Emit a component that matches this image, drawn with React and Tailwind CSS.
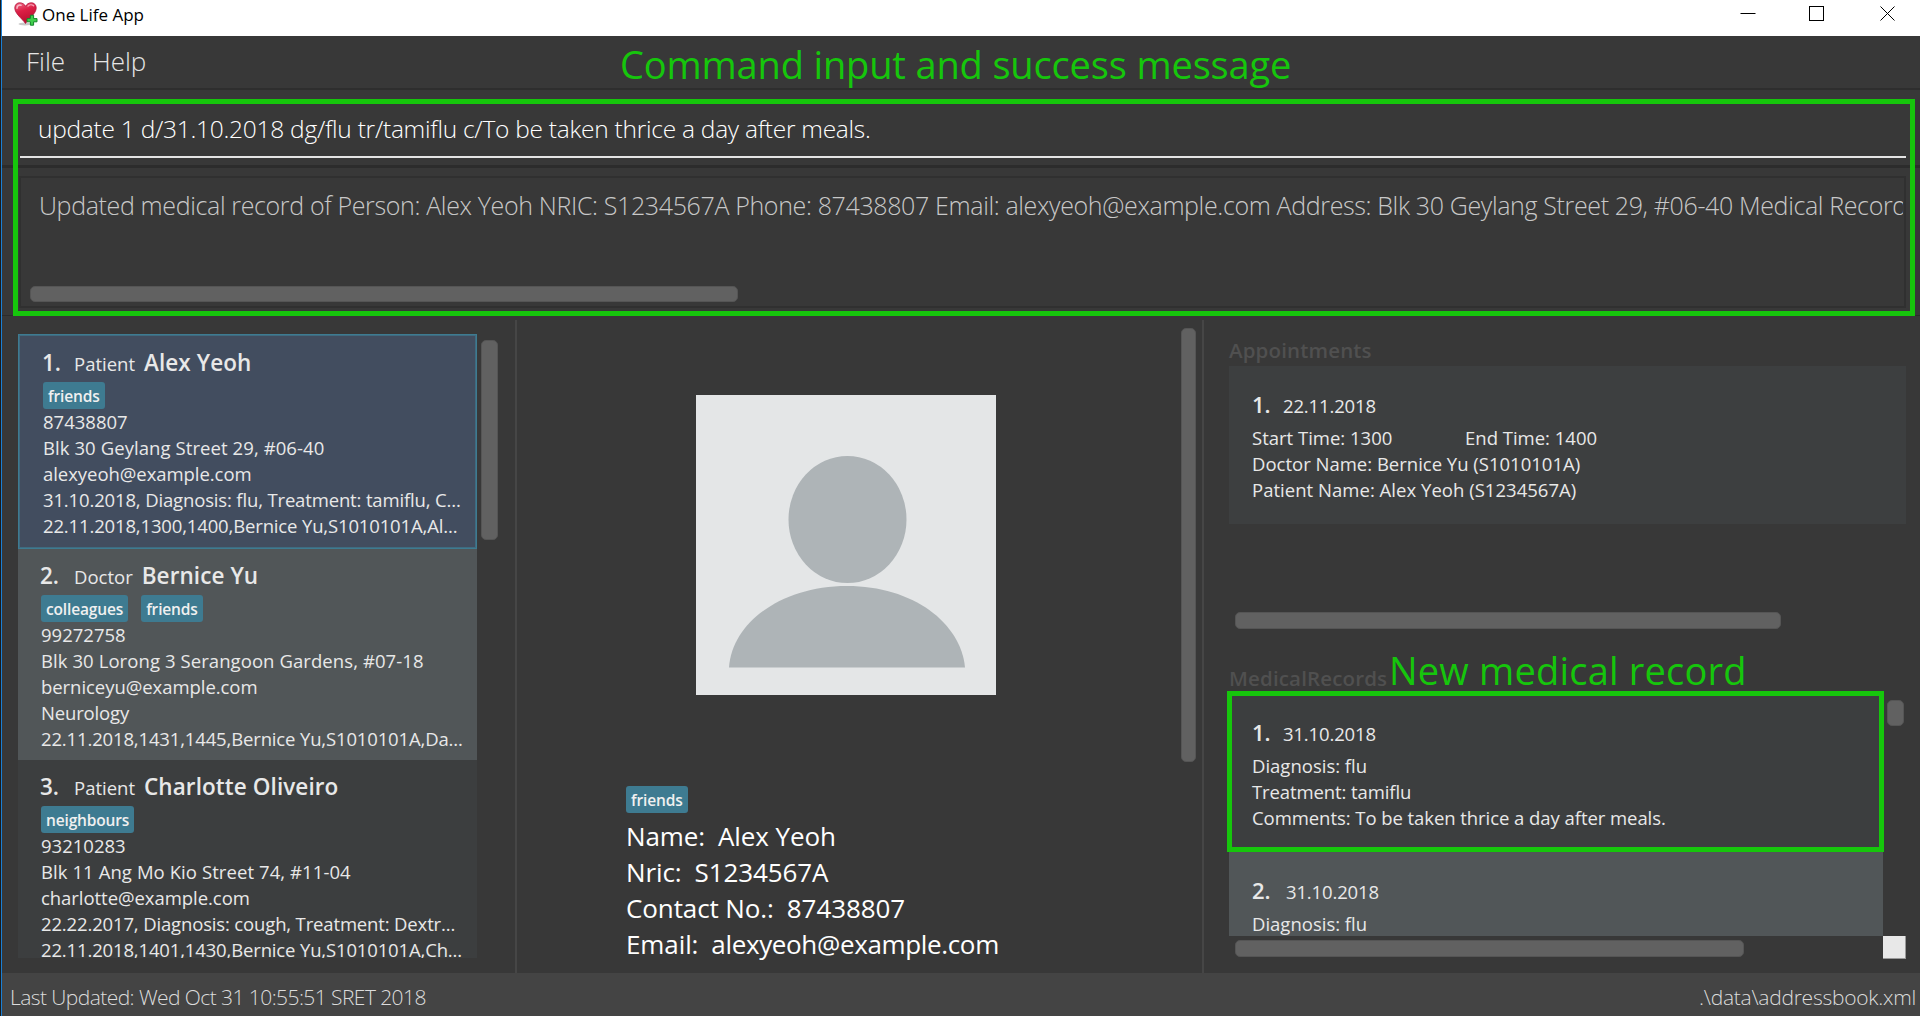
const people = [
  {
    id: "1.",
    role: "Patient",
    name: "Alex Yeoh",
    tags: ["friends"],
    phone: "87438807",
    address: "Blk 30 Geylang Street 29, #06-40",
    email: "alexyeoh@example.com",
    notes: ["31.10.2018, Diagnosis: flu, Treatment: tamiflu, C...", "22.11.2018,1300,1400,Bernice Yu,S1010101A,Al..."],
    card: "h-[215px] bg-[#424d5f] border border-[#3e7b91] shadow-[inset_0_0_0_1px_#3f6b80] pt-3 pl-[23px]",
    idWidth: "w-[32px]",
  },
  {
    id: "2.",
    role: "Doctor",
    name: "Bernice Yu",
    tags: ["colleagues", "friends"],
    phone: "99272758",
    address: "Blk 30 Lorong 3 Serangoon Gardens, #07-18",
    email: "berniceyu@example.com",
    notes: ["Neurology", "22.11.2018,1431,1445,Bernice Yu,S1010101A,Da..."],
    card: "h-[211px] bg-[#515658] pt-[11px] pl-[22px]",
    idWidth: "w-[34px]",
  },
  {
    id: "3.",
    role: "Patient",
    name: "Charlotte Oliveiro",
    tags: ["neighbours"],
    phone: "93210283",
    address: "Blk 11 Ang Mo Kio Street 74, #11-04",
    email: "charlotte@example.com",
    notes: ["22.22.2017, Diagnosis: cough, Treatment: Dextr...", "22.11.2018,1401,1430,Bernice Yu,S1010101A,Ch..."],
    card: "h-[211px] bg-[#3c3e3f] pt-[11px] pl-[22px]",
    idWidth: "w-[34px]",
  },
];

const details = [
  { label: "Name:", value: "Alex Yeoh", spacing: "tracking-[-0.1px]" },
  { label: "Nric:", value: "S1234567A", spacing: "tracking-[-0.1px]" },
  { label: "Contact No.:", value: "87438807", spacing: "tracking-[-0.1px]" },
  { label: "Email:", value: "alexyeoh@example.com", spacing: "tracking-[-0.35px]" },
];

function Tag({ children }) {
  return (
    <span className="flex h-[27px] items-center rounded-[3px] bg-[#3e7b91] px-[5px] pt-px text-[15.5px] leading-[26px] font-semibold tracking-[-0.15px] text-[#f0f0f0]">
      {children}
    </span>
  );
}

function Thumb({ className }) {
  return <div className={"rounded-[5px] border border-[#555555] bg-[#616161] " + className} />;
}

function PersonCard({ person }) {
  return (
    <div className={"shrink-0 overflow-hidden text-[#e8e8e8] " + person.card}>
      <div className="flex h-[31px] items-baseline whitespace-nowrap leading-[32px]">
        <span className={"text-[22.5px] font-semibold " + person.idWidth}>{person.id}</span>
        <span className="mr-[9px] text-[18.5px]">{person.role}</span>
        <span className="text-[22.5px] font-semibold tracking-[0.08px]">{person.name}</span>
      </div>
      <div className="mt-1 ml-px flex gap-[13px]">
        {person.tags.map((t) => (
          <Tag key={t}>{t}</Tag>
        ))}
      </div>
      <div className="ml-px text-[18.5px] leading-[26px] whitespace-nowrap">
        <p>{person.phone}</p>
        <p className="tracking-[0.08px]">{person.address}</p>
        <p className="tracking-[-0.05px]">{person.email}</p>
        {person.notes.map((n) => (
          <p key={n} className="tracking-[-0.15px]">
            {n}
          </p>
        ))}
      </div>
    </div>
  );
}

function RecordCard({ id, date, idWidth, className, children }) {
  return (
    <div className={"pt-[23px] pl-[23px] text-[18.5px] leading-[26px] whitespace-nowrap text-[#e8e8e8] " + className}>
      <div className="mb-[6px] flex h-[30px] items-baseline leading-[30px]">
        <span className={"text-[22px] font-semibold " + idWidth}>{id}</span>
        <span className="tracking-[-0.15px]">{date}</span>
      </div>
      {children}
    </div>
  );
}

function HeartIcon() {
  return (
    <svg className="h-6 w-[25px]" viewBox="0 0 25 24">
      <defs>
        <linearGradient id="heart" x1="0" y1="0" x2="0.3" y2="1">
          <stop offset="0" stopColor="#f0708a" />
          <stop offset="0.45" stopColor="#dc1f45" />
          <stop offset="1" stopColor="#b80f30" />
        </linearGradient>
      </defs>
      <ellipse cx="11" cy="22" rx="6.5" ry="1.4" fill="#c9c9c9" />
      <path
        d="M11.5 21.5 C8 16.5 0.8 11.5 0.8 6 C0.8 2.6 3 0.8 5.8 0.8 C8.4 0.8 10.6 2.2 11.6 4.4 C12.6 2.2 14.6 0.8 17.2 0.8 C20.2 0.8 22.2 2.8 22.2 6 C22.2 11.5 14.8 16.5 11.5 21.5 Z"
        fill="url(#heart)"
        stroke="#b3123a"
        strokeWidth="0.8"
      />
      <path d="M3 6.2 C3 3.8 4.8 2.6 7 3.2" fill="none" stroke="#f9bccb" strokeWidth="1.5" strokeLinecap="round" />
      <path d="M14 4.2 C15.4 2.6 18 2.4 19.6 3.8" fill="none" stroke="#f7a3b6" strokeWidth="1.2" strokeLinecap="round" />
      <path
        d="M16.4 13.2h3.2v3.4h3.4v3.2h-3.4v3.4h-3.2v-3.4H13v-3.2h3.4z"
        fill="#3fcf4c"
        stroke="#14862a"
        strokeWidth="1"
      />
    </svg>
  );
}

function TitleBar() {
  return (
    <header className="flex h-9 shrink-0 bg-white pl-3">
      <div className="mt-[2px]">
        <HeartIcon />
      </div>
      <span className="ml-[3px] text-[17px] leading-[30px] text-black">One Life App</span>
      <svg className="mt-[5px] mr-[23px] ml-auto h-[18px] w-[157px]" viewBox="0 0 157 18" fill="none" stroke="#000" strokeWidth="1">
        <path d="M0.5 8.5h15" />
        <rect x="69.5" y="1.5" width="14" height="14" />
        <path d="M140.5 1.5l14 14M154.5 1.5l-14 14" />
      </svg>
    </header>
  );
}

function CommandArea() {
  return (
    <section className="relative h-[225px] shrink-0">
      <div className="h-[75px] pt-[9px] pr-[14px] pl-[18px]">
        <div className="h-[59px] border-b-2 border-[#e4e4e4] pl-[18px] text-[24.5px] leading-[60px] font-light tracking-[-0.26px] whitespace-nowrap text-white">
          update 1 d/31.10.2018 dg/flu tr/tamiflu c/To be taken thrice a day after meals.
        </div>
      </div>
      <div className="h-[3px] bg-[#2c2c2c]" />
      <div className="mt-2 mr-[14px] ml-[17px] flex h-[132px] flex-col justify-between overflow-hidden border-2 border-[#303030] pr-px pb-1 pl-2">
        <p className="mt-[9px] ml-[10px] overflow-hidden text-[25px] leading-[36px] font-light tracking-[-0.36px] whitespace-nowrap text-[#c8c8c8]">
          Updated medical record of Person: Alex Yeoh NRIC: S1234567A Phone: 87438807 Email: alexyeoh@example.com Address: Blk 30
          Geylang Street 29, #06-40 Medical Records
        </p>
        <Thumb className="ml-px h-4 w-[708px]" />
      </div>
      <div className="absolute top-[9px] left-[11px] h-[217px] w-[1902px] border-[5px] border-[#16c60c]" />
    </section>
  );
}

export default function App() {
  return (
    <div
      className="h-[1016px] w-[1920px] overflow-hidden border-l border-[#1b1b1b] bg-[#383838]"
      style={{ fontFamily: '"Open Sans", "Noto Sans", sans-serif' }}
    >
      <div className="flex h-full flex-col border-l border-[#1a7fd4]">
        <TitleBar />
        <nav className="relative flex h-[54px] shrink-0 border-b-2 border-[#2e2e2e] text-[26px] leading-[51px] font-light text-[#e6e6e6]">
          <span className="ml-6 w-[66px]">File</span>
          <span>Help</span>
          <span className="absolute top-px left-[618px] text-[38px] leading-[54px] font-normal tracking-[-0.15px] whitespace-nowrap text-[#16c60c]">
            Command input and success message
          </span>
        </nav>
        <CommandArea />

        <main className="flex h-[658px] shrink-0 border-t border-[#2c2c2c] pt-1">
          <section className="flex w-[513px] shrink-0 pt-[14px] pl-4">
            <div className="flex h-[624px] w-[459px] flex-col overflow-hidden">
              {people.map((p) => (
                <PersonCard key={p.id} person={p} />
              ))}
            </div>
            <Thumb className="mt-[6px] ml-1 h-[200px] w-[17px]" />
          </section>

          <section className="flex w-[687px] shrink-0 border-l-2 border-[#464646] pl-[109px]">
            <div className="w-[440px]">
              <svg className="mt-[75px] ml-[70px] h-[300px] w-[300px]" viewBox="0 0 300 300">
                <rect width="300" height="300" fill="#e4e6e7" />
                <ellipse cx="151.5" cy="124.5" rx="59" ry="63.5" fill="#aeb4b7" />
                <path d="M33 272.5C36 228 85 191 151 191S265 228 269 272.5z" fill="#aeb4b7" />
              </svg>
              <div className="mt-[91px] flex">
                <Tag>friends</Tag>
              </div>
              <div className="mt-[5px]">
                {details.map((d) => (
                  <p
                    key={d.label}
                    className="flex h-9 gap-[13px] text-[26px] leading-9 tracking-[-0.1px] whitespace-nowrap text-white"
                  >
                    <span>{d.label}</span>
                    <span className={d.spacing}>{d.value}</span>
                  </p>
                ))}
              </div>
            </div>
            <Thumb className="mt-2 ml-[115px] h-[434px] w-[15px]" />
          </section>

          <section className="flex-1 border-l-2 border-[#464646] pl-[25px]">
            <h2 className="mt-[17px] h-[29px] text-[20.5px] leading-[27px] font-semibold tracking-[0.15px] text-[#505050]">
              Appointments
            </h2>
            <RecordCard id="1." date="22.11.2018" idWidth="w-[31px]" className="h-[158px] w-[677px] bg-[#3d3f40]">
              <div className="flex">
                <span className="w-[213px]">Start Time: 1300</span>
                <span>End Time: 1400</span>
              </div>
              <p>Doctor Name: Bernice Yu (S1010101A)</p>
              <p className="tracking-[0.03px]">Patient Name: Alex Yeoh (S1234567A)</p>
            </RecordCard>
            <Thumb className="mt-[88px] ml-[6px] h-[17px] w-[546px]" />

            <div className="relative mt-[35px] h-[30px]">
              <h2 className="text-[20.5px] leading-[28px] font-semibold tracking-[0.15px] text-[#505050]">MedicalRecords</h2>
              <span className="absolute top-[-21px] left-[160px] text-[38px] leading-[54px] tracking-[0.2px] whitespace-nowrap text-[#16c60c]">
                New medical record
              </span>
            </div>
            <div className="flex">
              <div className="relative h-[242px] w-[654px]">
                <div className="h-full overflow-hidden">
                  <RecordCard id="1." date="31.10.2018" idWidth="w-[31px]" className="h-[158px] bg-[#3c3e3f]">
                    <p>Diagnosis: flu</p>
                    <p className="tracking-[-0.1px]">Treatment: tamiflu</p>
                    <p className="tracking-[-0.06px]">Comments: To be taken thrice a day after meals.</p>
                  </RecordCard>
                  <RecordCard id="2." date="31.10.2018" idWidth="w-[34px]" className="h-[158px] bg-[#515658]">
                    <p>Diagnosis: flu</p>
                  </RecordCard>
                </div>
                <div className="absolute -top-[3px] -left-[2px] h-[161px] w-[657px] border-[5px] border-[#16c60c]" />
              </div>
              <Thumb className="mt-[6px] ml-1 h-[26px] w-[17px]" />
            </div>
            <div className="flex h-[23px] w-[677px] justify-between">
              <Thumb className="mt-1 ml-[6px] h-[17px] w-[509px]" />
              <div className="w-[23px] border-r border-b border-[#9a9a9a] bg-[#e8e8e8]" />
            </div>
          </section>
        </main>

        <footer className="flex flex-1 justify-between border-b border-[#3c3838] bg-[#444444] pr-1 pl-2 text-[21px] leading-[49px] font-light whitespace-nowrap text-[#dcdcdc]">
          <span className="tracking-[-0.57px]">Last Updated: Wed Oct 31 10:55:51 SRET 2018</span>
          <span className="tracking-[-0.25px]">.\data\addressbook.xml</span>
        </footer>
      </div>
    </div>
  );
}
